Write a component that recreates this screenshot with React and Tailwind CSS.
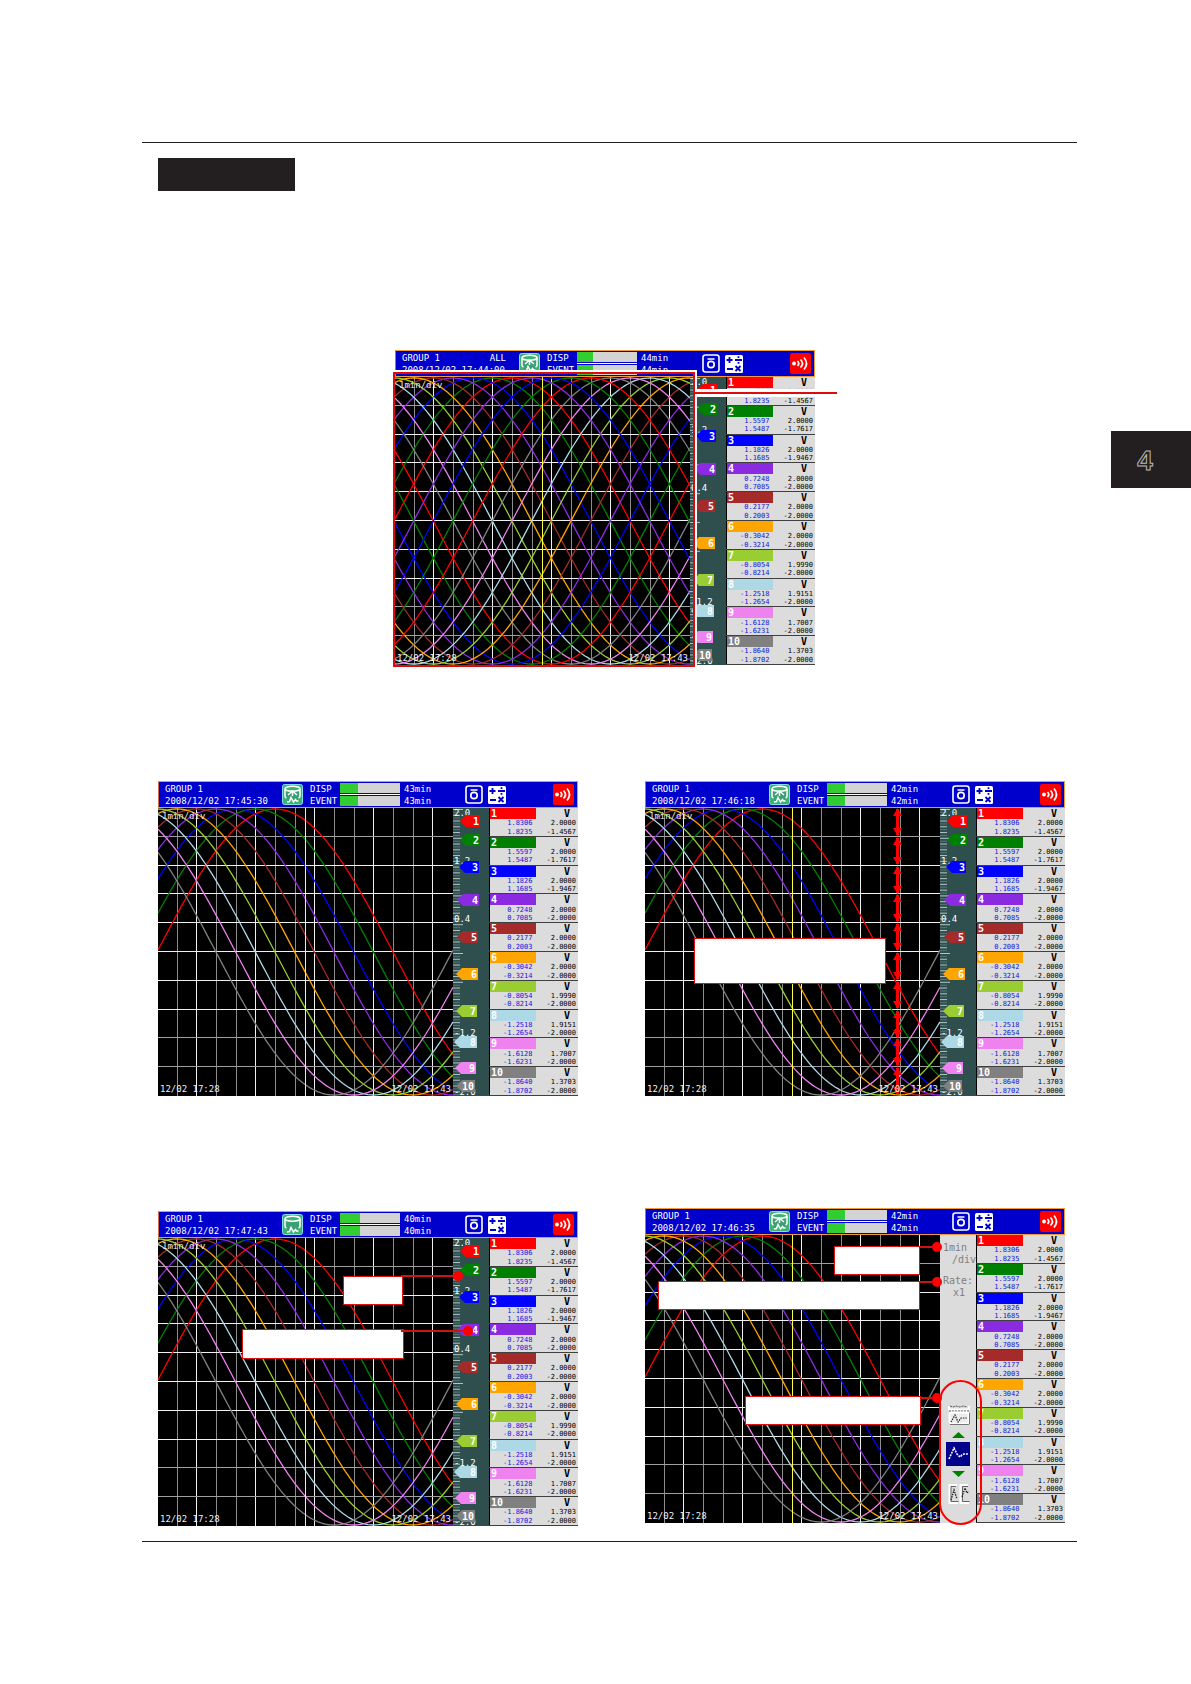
import React from "react";

const channels = [
  { no: 1, color: "#ff0000", low: "1.8306", high: "1.8235", max: "2.0000", min: "-1.4567", y: 13, tip: 7, end: 27 },
  { no: 2, color: "#008000", low: "1.5597", high: "1.5487", max: "2.0000", min: "-1.7617", y: 32, tip: 7, end: 27 },
  { no: 3, color: "#0000ff", low: "1.1826", high: "1.1685", max: "2.0000", min: "-1.9467", y: 59, tip: 6, end: 26 },
  { no: 4, color: "#8a2be2", low: "0.7248", high: "0.7085", max: "2.0000", min: "-2.0000", y: 92, tip: 4, end: 26 },
  { no: 5, color: "#a52a2a", low: "0.2177", high: "0.2003", max: "2.0000", min: "-2.0000", y: 129, tip: 4, end: 25 },
  { no: 6, color: "#ffa500", low: "-0.3042", high: "-0.3214", max: "2.0000", min: "-2.0000", y: 166, tip: 3, end: 25 },
  { no: 7, color: "#9acd32", low: "-0.8054", high: "-0.8214", max: "1.9990", min: "-2.0000", y: 203, tip: 3, end: 24 },
  { no: 8, color: "#add8e6", low: "-1.2518", high: "-1.2654", max: "1.9151", min: "-2.0000", y: 234, tip: 1, end: 24 },
  { no: 9, color: "#ee82ee", low: "-1.6128", high: "-1.6231", max: "1.7007", min: "-2.0000", y: 260, tip: 2, end: 23 },
  { no: 10, color: "#808080", low: "-1.8640", high: "-1.8702", max: "1.3703", min: "-2.0000", y: 278, tip: 3, end: 22 },
];

const scaleLabels = [
  { text: "2.0", y: 8 },
  { text: "1.2", y: 56 },
  { text: "0.4", y: 114 },
  { text: "-1.2", y: 228 },
  { text: "-2.0", y: 287 },
];

const PLOT_W = 295;
const PLOT_H = 288;
const DIV = 19.67;

const wavePath = (index) => {
  const zero = 235 - index * DIV;
  let d = "";
  for (let x = 0; x <= PLOT_W; x += 2.5) {
    const y = 144 + 143 * Math.sin(((x - zero) * 2 * Math.PI) / (DIV * 24));
    d += `${x === 0 ? "M" : "L"}${x} ${y.toFixed(1)}`;
  }
  return d;
};

const mono = "font-['DejaVu_Sans_Mono','Liberation_Mono',monospace]";

const PaperIcon = ({ arrow }) => (
  <svg viewBox="0 0 21 21" className="size-[21px] shrink-0">
    <rect x="0.5" y="0.5" width="20" height="20" rx="2" fill="#3cb371" stroke="#7fe0e8" />
    <path d="M3 5v8q0 1.500 2 2l1 3 2-1 2-3 2 4 2-2h2l2-2.500V5" fill="#3a9f74" />
    <path
      d="M3 5v7q0 1.500 1.500 2M18 5v7q0 1.500-1.500 2M5 18l2.500-.5 1.500-4 2.500 4.500 2-2.500 1 1.500h2"
      fill="none"
      stroke="#fff"
      strokeWidth="1.500"
    />
    <ellipse cx="10.500" cy="4.800" rx="7.500" ry="2.500" fill="#3cb371" stroke="#fff" strokeWidth="1.500" />
    {arrow && <path d="M10.500 12V7M6 11l4.500-4L15 11" fill="none" stroke="#fff" strokeWidth="1.500" />}
  </svg>
);

const CameraIcon = () => (
  <svg viewBox="0 0 18 19" className="h-[19px] w-[18px] shrink-0">
    <rect x="1" y="1" width="16" height="17" rx="2.5" fill="#0000cc" stroke="#fff" strokeWidth="1.600" />
    <path d="M5.500 5h7" stroke="#fff" strokeWidth="1.500" />
    <circle cx="9" cy="10.500" r="3.200" fill="none" stroke="#fff" strokeWidth="1.700" />
  </svg>
);

const MathIcon = () => (
  <svg viewBox="0 0 18 18" className="size-[18px] shrink-0">
    <rect width="18" height="18" rx="1.5" fill="#fff" />
    <path
      d="M1.500 5h6M4.500 2v6M10 5h7M2 14h6M10.500 11l5 5M15.500 11l-5 5"
      stroke="#0000cc"
      strokeWidth="1.800"
    />
    <path d="M12.600 2.200h1.800M12.600 7.800h1.800" stroke="#0000cc" strokeWidth="1.800" />
  </svg>
);

const AlarmIcon = () => (
  <svg viewBox="0 0 21 21" className="size-[21px] shrink-0">
    <rect width="21" height="21" rx="2" fill="#ff0000" />
    <circle cx="4" cy="10.500" r="1.900" fill="#fff" />
    <path
      d="M7.500 8q2.500 2.500 0 5M10.500 6.500q4 4 0 8M14 4.500q5 6 0 12"
      fill="none"
      stroke="#fff"
      strokeWidth="1.700"
    />
  </svg>
);

const Meter = ({ used }) => (
  <div className="h-[10px] w-[60px] bg-[#d3d3d3]">
    <div className="h-full bg-[#32cd32]" style={{ width: `${used}px` }} />
  </div>
);

const Header = ({ time, left, used, all, arrow }) => (
  <header className="flex h-[27px] items-center border border-[#f09a3c] border-l-[#d06a50] bg-[#0000cc] pl-[6px] pr-[3px] text-[9px] leading-[12px] text-white">
    <div className="w-[104px] whitespace-nowrap">
      <div className="flex justify-between">
        <span>GROUP 1</span>
        {all && <span>ALL</span>}
      </div>
      <div>{time}</div>
    </div>
    <div className="ml-[13px]">
      <PaperIcon arrow={arrow} />
    </div>
    <div className="ml-[7px] w-[27px]">
      <div>DISP</div>
      <div>EVENT</div>
    </div>
    <div className="ml-[3px] flex flex-col gap-px">
      <Meter used={used} />
      <div className="h-px bg-white" />
      <Meter used={used} />
    </div>
    <div className="ml-[4px]">
      <div>{left}</div>
      <div>{left}</div>
    </div>
    <div className="ml-auto flex items-center">
      <CameraIcon />
      <div className="ml-[5px]">
        <MathIcon />
      </div>
      <div className="ml-[47px]">
        <AlarmIcon />
      </div>
    </div>
  </header>
);

const Plot = ({ count = 10, cursor, showRate = true }) => (
  <div className="relative min-w-0 flex-1 bg-black">
    <svg viewBox={`0 0 ${PLOT_W} ${PLOT_H}`} preserveAspectRatio="none" className="block h-full w-full">
      <g shapeRendering="crispEdges">
        {Array.from({ length: 14 }, (_, k) => (
          <rect
            key={k}
            x={Math.round((k + 1) * DIV) - 1}
            y="0"
            width="1"
            height={PLOT_H}
            fill={k % 3 === 1 ? "#f0f0f0" : "#8c8c8c"}
          />
        ))}
        {Array.from({ length: 9 }, (_, k) => (
          <rect
            key={k}
            x="0"
            y={Math.round((k + 1) * 28.8) - 1}
            width={PLOT_W}
            height="1"
            fill={k === 0 || k > 6 ? "#a0a0a0" : "#f0f0f0"}
          />
        ))}
      </g>
      {Array.from({ length: count }, (_, i) => (
        <path key={i} d={wavePath(i)} fill="none" stroke={channels[i % 10].color} strokeWidth="1.3" />
      ))}
      <rect x="147" y="0" width="1" height={PLOT_H} fill="#ffff40" shapeRendering="crispEdges" />
      {cursor &&
        Array.from({ length: 10 }, (_, k) => {
          const top = Math.round(k * 28.8) + 1;
          return (
            <g key={k} fill="#ff0000">
              <rect x="251" y={top} width="3" height="26" />
              <path d={`M252.500 ${top - 1}l4.500 8h-9zM252.500 ${top + 27}l4.500-8h-9z`} />
            </g>
          );
        })}
    </svg>
    {showRate && (
      <span className="absolute left-[4px] top-[2px] text-[9px] leading-[12px] text-[#e8e8e8]">1min/div</span>
    )}
    <span className="absolute bottom-0 left-[2px] text-[9px] leading-[13px] text-[#f0f0f0]">12/02 17:28</span>
    <span className="absolute bottom-0 right-[2px] text-[9px] leading-[13px] text-[#f0f0f0]">12/02 17:43</span>
  </div>
);

const Scale = () => (
  <svg viewBox="0 0 36 288" className="h-[288px] w-[36px] shrink-0 bg-[#2f4f4f]">
    {Array.from({ length: 100 }, (_, k) => (
      <rect
        key={k}
        x="0"
        y={1 + k * 2.88}
        width={k % 10 === 0 ? 10 : 7}
        height="1"
        fill={k % 2 ? "#587272" : "#b4c2c2"}
      />
    ))}
    {scaleLabels.map((label) => (
      <text key={label.text} x="1" y={label.y} fontSize="9" fill="#fff">
        {label.text}
      </text>
    ))}
    {channels.map((ch) => (
      <g key={ch.no}>
        <path d={`M${ch.tip} ${ch.y}l6-6H${ch.end}v12H${ch.tip + 6}z`} fill={ch.color} />
        <text x={ch.end - 1} y={ch.y + 4} fontSize="10" fontWeight="bold" textAnchor="end" fill="#fff">
          {ch.no}
        </text>
      </g>
    ))}
  </svg>
);

const MenuStrip = () => (
  <div className="flex w-[36px] shrink-0 flex-col items-center bg-[#dcdcdc] pt-[7px] text-[10px] leading-[12px] text-[#808080]">
    <div className="h-[33px] w-full pl-[3px]">
      <div>1min</div>
      <div className="pl-[9px]">/div</div>
    </div>
    <div className="w-full pl-[3px]">
      <div>Rate:</div>
      <div className="pl-[10px]">x1</div>
    </div>
    <svg viewBox="0 0 36 110" className="mt-[104px] h-[110px] w-[36px] shrink-0">
      <path d="M9 3v3.500h20V3" fill="none" stroke="#fff" strokeWidth="2" />
      <path d="M10 3l3 1 3-1 4 1 3-1 4 1M9 8h20" fill="none" stroke="#333" strokeDasharray="2 1" strokeWidth="0.800" />
      <rect x="9.500" y="9.500" width="19" height="11" rx="1.500" fill="#ececec" stroke="#fff" strokeWidth="1.800" />
      <path d="M10 21.500h18.500q1 0 1-1.500V10" fill="none" stroke="#555" strokeWidth="0.800" />
      <path d="M11 19l4-7 3 7 3-4h6" fill="none" stroke="#222" strokeDasharray="1.500 1" strokeWidth="1.200" />
      <path d="M12 35h13l-6.500-6zM12 68h13l-6.500 6z" fill="#008000" />
      <rect x="6" y="39" width="24" height="24" fill="#00008b" />
      <path d="M9 56l5-11 3 6 3 3 2-2 2-1h4" fill="none" stroke="#fff" strokeDasharray="2 1" strokeWidth="1.600" />
      <path d="M17 82H9.500v18H18M28 82h-7.500v18H29" fill="none" stroke="#fff" strokeWidth="2" />
      <path d="M16 83.500h-5v15h7.500M28 83.500h-5.500v15h7" fill="none" stroke="#444" strokeWidth="0.800" />
      <path d="M11 97l3-10 3 9M22 94l3-9 2 5 2-2" fill="none" stroke="#222" strokeDasharray="1.500 1" strokeWidth="1.300" />
    </svg>
  </div>
);

const ChannelTable = () => (
  <table className="h-[288px] w-[89px] shrink-0 table-fixed border-collapse border-l border-black bg-[#dcdcdc] text-[7px] leading-[8px]">
    {channels.map((ch) => (
      <tbody key={ch.no} className="border-b border-[#404040]">
        <tr>
          <th
            className="h-[11px] w-[46px] p-0 pl-px text-left text-[10px] leading-[11px] text-white"
            style={{ background: ch.color }}
          >
            {ch.no}
          </th>
          <td className="p-0 pr-[8px] text-right text-[10px] font-bold leading-[11px]">V</td>
        </tr>
        <tr>
          <td className="p-0 pr-[3px] text-right text-[#1414e0]">{ch.low}</td>
          <td className="p-0 pr-[2px] text-right">{ch.max}</td>
        </tr>
        <tr>
          <td className="p-0 pr-[3px] text-right text-[#1414e0]">{ch.high}</td>
          <td className="p-0 pr-[2px] text-right">{ch.min}</td>
        </tr>
      </tbody>
    ))}
  </table>
);

const Screen = ({ time, left, used, all, arrow = true, count, cursor, menu, children }) => (
  <section className={`relative w-full ${mono}`}>
    <Header time={time} left={left} used={used} all={all} arrow={arrow} />
    <div className="flex h-[288px] overflow-hidden">
      <Plot count={count} cursor={cursor} showRate={!menu} />
      {menu ? <MenuStrip /> : <Scale />}
      <ChannelTable />
    </div>
    {children}
  </section>
);

const Callout = ({ className }) => (
  <div className={`absolute border border-[#e01010] bg-white ${className}`} />
);

// thin line that ends in a dot
const Leader = ({ className }) => (
  <div className={`absolute flex h-[10px] items-center ${className}`}>
    <div className="h-[2px] flex-1 bg-[#cc1414]" />
    <div className="size-[10px] rounded-full bg-[#ff0000]" />
  </div>
);

const App = () => {
  return (
    <div className="flex items-start bg-white pb-[142px] text-black">
      <main className="min-w-0 flex-1 pl-[142px] pr-[34px] pt-[142px]">
        <div className="border-y border-[#231f20] pb-[15px] pl-[16px] pr-[12px] pt-[15px]">
          <div className="h-[33px] w-[137px] bg-[#231f20]" />

          <div className="ml-[237px] mt-[159px] w-[420px]">
            <Screen time="2008/12/02 17:44:00" left="44min" used={16} all count={24}>
              <div className="absolute -left-[2px] top-[22px] h-[295px] w-[302px] border-2 border-[#dc0c0c] outline-2 outline-white" />
              <div className="absolute left-[300px] top-[39px] h-[8px] w-[142px] border-y-[3px] border-white bg-[#dc0c0c]" />
            </Screen>
          </div>

          <div className="mt-[116px] grid grid-cols-2 items-start gap-x-[67px] gap-y-[112px]">
            <Screen time="2008/12/02 17:45:30" left="43min" used={18} />
            <Screen time="2008/12/02 17:46:18" left="42min" used={18} cursor>
              <Callout className="left-[49px] top-[157px] h-[46px] w-[192px]" />
            </Screen>

            <div className="pt-[3px]">
              <Screen time="2008/12/02 17:47:43" left="40min" used={20} arrow={false}>
                <Callout className="left-[185px] top-[65px] h-[29px] w-[60px]" />
                <Leader className="left-[243px] top-[60px] w-[62px]" />
                <Callout className="left-[84px] top-[118px] h-[30px] w-[162px]" />
                <Leader className="left-[243px] top-[115px] w-[72px]" />
              </Screen>
            </div>
            <Screen time="2008/12/02 17:46:35" left="42min" used={18} menu>
              <Callout className="left-[189px] top-[38px] h-[29px] w-[86px]" />
              <Leader className="left-[274px] top-[34px] w-[23px]" />
              <Callout className="left-[13px] top-[73px] h-[29px] w-[262px]" />
              <Leader className="left-[274px] top-[69px] w-[23px]" />
              <Callout className="left-[100px] top-[188px] h-[29px] w-[176px]" />
              <Leader className="left-[275px] top-[185px] w-[22px]" />
              <div className="absolute left-[294px] top-[172px] h-[145px] w-[43px] rounded-full border-2 border-[#ff0000]" />
            </Screen>
          </div>
        </div>
      </main>

      <aside className="mt-[431px] flex h-[57px] w-[80px] shrink-0 items-center justify-center bg-[#231f20] pr-[12px] pt-[2px] font-['Liberation_Sans',Arial,sans-serif] text-[28px] font-bold leading-[28px] text-[#231f20] [-webkit-text-stroke:1px_#b8b8b8]">
        4
      </aside>
    </div>
  );
};

export default App;
